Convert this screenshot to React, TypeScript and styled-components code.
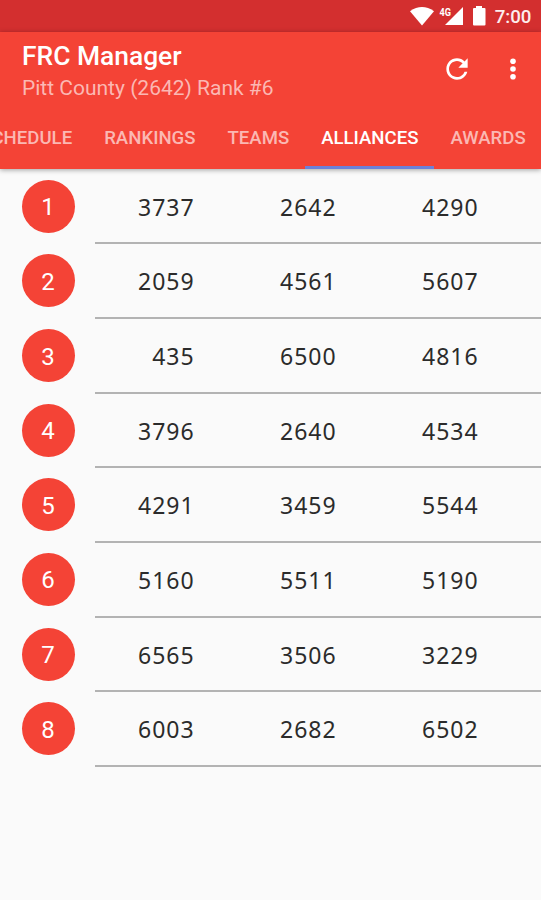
import React from 'react';
import styled, { createGlobalStyle } from 'styled-components';

const GlobalStyle = createGlobalStyle`
  * { box-sizing: border-box; }
  body { margin: 0; background: #fafafa; overflow: hidden; }
`;

const Screen = styled.div`
  width: 541px;
  height: 900px;
  overflow: hidden;
  background: #fafafa;
  font-family: Roboto, 'Liberation Sans', sans-serif;
`;

const StatusBar = styled.div`
  height: 32px;
  padding: 2px 9.5px 0 0;
  display: flex;
  justify-content: flex-end;
  align-items: center;
  background: #d32f2f;
`;

const StatusIcons = styled.svg`
  display: block;
  margin: -2px 8px 0 0;
`;

const Clock = styled.span`
  color: #fdeeee;
  font-size: 18.7px;
  font-weight: 500;
  line-height: 30px;
`;

const Header = styled.header`
  height: 137px;
  display: flex;
  flex-direction: column;
  background: #f44336;
  box-shadow: 0 1px 5px rgba(0, 0, 0, 0.36);
`;

const Toolbar = styled.div`
  height: 75px;
  padding: 0 20px 0 22px;
  display: flex;
  justify-content: space-between;
`;

const Titles = styled.div`
  padding-top: 8px;
`;

const Title = styled.h1`
  margin: 0;
  color: #fff;
  font-size: 26.4px;
  font-weight: 500;
  line-height: 32px;
  white-space: nowrap;
`;

const Subtitle = styled.div`
  color: #fbb8b3;
  font-size: 21px;
  line-height: 32px;
  white-space: nowrap;
`;

const Actions = styled.div`
  padding-top: 21px;
  display: flex;
  gap: 32px;
`;

const IconButton = styled.button<{ $width: number }>`
  width: ${(p) => p.$width}px;
  height: 32px;
  padding: 0;
  border: 0;
  background: none;
  color: #fff;

  svg { display: block; }
`;

const Tabs = styled.nav`
  height: 62px;
  margin-left: -35.8px;
  display: flex;
`;

const Tab = styled.button<{ $active?: boolean }>`
  flex: none;
  padding: 4px 16px 0;
  border: 0;
  border-bottom: 3px solid ${(p) => (p.$active ? '#6c80d9' : 'transparent')};
  background: none;
  color: ${(p) => (p.$active ? '#fff' : '#fbb8b3')};
  font: 500 18.6px/55px Roboto, sans-serif;
  white-space: nowrap;
`;

const List = styled.main`
  padding-top: 0.8px;
  display: flex;
  flex-direction: column;
`;

const Row = styled.div`
  height: 74.67px;
  display: grid;
  grid-template-columns: 95.4px 1fr;
`;

const Badge = styled.div`
  width: 53px;
  height: 53px;
  margin: 9.9px 0 0 21.5px;
  border-radius: 50%;
  display: flex;
  justify-content: center;
  align-items: center;
  background: #f44336;
  color: #fff;
  font-size: 24px;
  line-height: 28px;
  padding-top: 2px;
`;

const Teams = styled.div`
  display: grid;
  grid-template-columns: 99.4px 142px 142px;
  border-bottom: 2px solid #b3b3b3;
  padding-top: 18.8px;
`;

const Team = styled.span`
  color: #2b2b2b;
  font-family: 'Noto Sans', 'Open Sans', sans-serif;
  font-size: 23px;
  line-height: 36px;
  letter-spacing: 1.05px;
  text-align: right;
`;

const tabs = ['SCHEDULE', 'RANKINGS', 'TEAMS', 'ALLIANCES', 'AWARDS'];

const alliances = [
  [3737, 2642, 4290],
  [2059, 4561, 5607],
  [435, 6500, 4816],
  [3796, 2640, 4534],
  [4291, 3459, 5544],
  [5160, 5511, 5190],
  [6565, 3506, 3229],
  [6003, 2682, 6502],
];

export default function App() {
  return (
    <Screen>
      <GlobalStyle />
      <StatusBar>
        <StatusIcons width="78" height="22" viewBox="409 5 78 22" fill="#fff">
          <path d="M410 11.2Q422 2.8 434 11.2L422 25.5Z" />
          <path d="M463 7V25H445Z" />
          <text x="439.5" y="16" fontSize="10" fontWeight="700" fontFamily="Roboto, sans-serif" textLength="11.5" lengthAdjust="spacingAndGlyphs" stroke="#d32f2f" strokeWidth="1.5" paintOrder="stroke">4G</text>
          <path d="M476 6h6v2h2.500q1 0 1 1v15.500q0 1-1 1h-10.500q-1 0-1-1v-15.500q0-1 1-1h2Z" />
        </StatusIcons>
        <Clock>7:00</Clock>
      </StatusBar>
      <Header>
        <Toolbar>
          <Titles>
            <Title>FRC Manager</Title>
            <Subtitle>Pitt County (2642) Rank #6</Subtitle>
          </Titles>
          <Actions>
            <IconButton $width={32} aria-label="Refresh">
              <svg width="32" height="32" viewBox="0 0 24 24" fill="currentColor">
                <path d="M17.650 6.350C16.200 4.900 14.210 4 12 4c-4.420 0-7.990 3.580-7.990 8s3.570 8 7.990 8c3.730 0 6.840-2.550 7.730-6h-2.080c-.82 2.330-3.040 4-5.650 4-3.310 0-6-2.690-6-6s2.690-6 6-6c1.660 0 3.140.69 4.220 1.780L13 11h7V4l-2.350 2.350z" />
              </svg>
            </IconButton>
            <IconButton $width={16} aria-label="More options">
              <svg width="16" height="32" viewBox="0 0 16 32" fill="currentColor">
                <circle cx="8" cy="8.200" r="2.800" />
                <circle cx="8" cy="16" r="2.800" />
                <circle cx="8" cy="23.800" r="2.800" />
              </svg>
            </IconButton>
          </Actions>
        </Toolbar>
        <Tabs>
          {tabs.map((name) => (
            <Tab key={name} $active={name === 'ALLIANCES'}>{name}</Tab>
          ))}
        </Tabs>
      </Header>
      <List>
        {alliances.map((teams, i) => (
          <Row key={i}>
            <Badge>{i + 1}</Badge>
            <Teams>
              {teams.map((team) => (
                <Team key={team}>{team}</Team>
              ))}
            </Teams>
          </Row>
        ))}
      </List>
    </Screen>
  );
}
